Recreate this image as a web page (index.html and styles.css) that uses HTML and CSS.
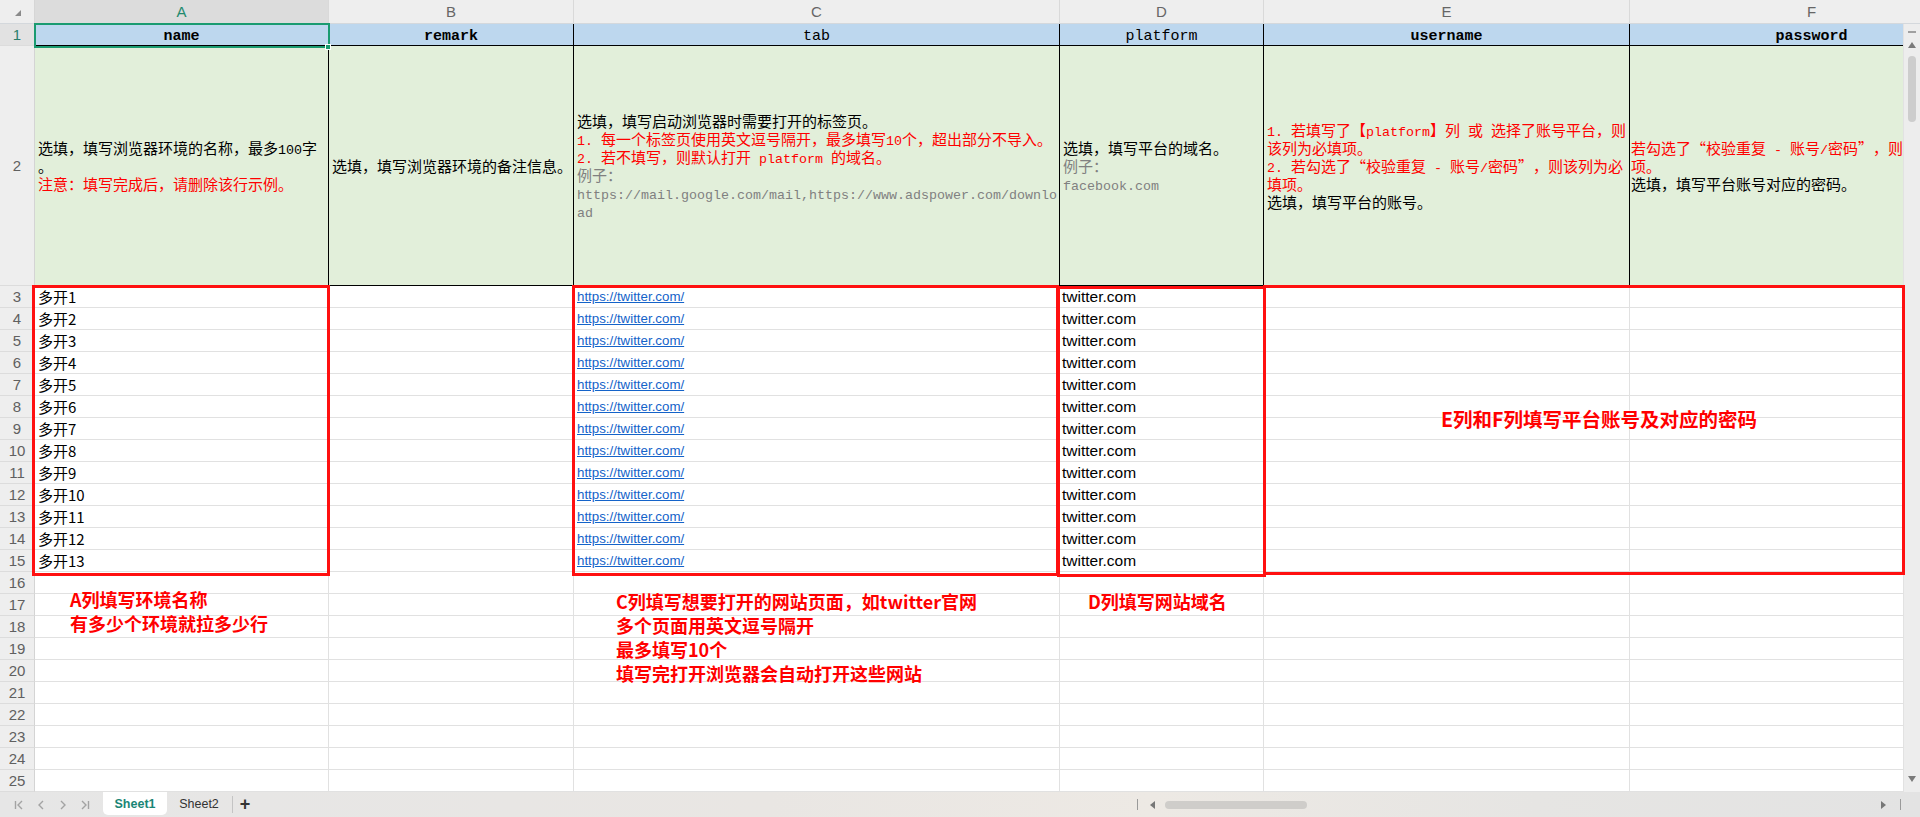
FILE: index.html
```html
<!DOCTYPE html>
<html lang="zh-CN">
<head>
<meta charset="utf-8">
<title>Sheet</title>
<link rel="stylesheet" href="styles.css">
</head>
<body>
<div class="app">
  <div class="colbar">
    <div class="corner"><span class="corner-tri"></span></div>
    <div class="ch ca on">A</div>
    <div class="ch cb">B</div>
    <div class="ch cc">C</div>
    <div class="ch cd">D</div>
    <div class="ch ce">E</div>
    <div class="ch cf">F</div>
  </div>

  <div class="body">
    <div class="grid">
      <div class="row r1">
        <div class="rh on">1</div>
        <div class="c ca"><b>name</b></div>
        <div class="c cb"><b>remark</b></div>
        <div class="c cc">tab</div>
        <div class="c cd">platform</div>
        <div class="c ce"><b>username</b></div>
        <div class="c cf"><b>password</b></div>
      </div>

      <div class="row r2">
        <div class="rh">2</div>
        <div class="c ca"><div class="txt">
          <div>选填，填写浏览器环境的名称，最多<span class="m">100</span>字</div>
          <div>。</div>
          <div class="red">注意：填写完成后，请删除该行示例。</div>
        </div></div>
        <div class="c cb"><div class="txt">
          <div>选填，填写浏览器环境的备注信息。</div>
        </div></div>
        <div class="c cc"><div class="txt">
          <div>选填，填写启动浏览器时需要打开的标签页。</div>
          <div class="red"><span class="m">1. </span>每一个标签页使用英文逗号隔开，最多填写<span class="m">10</span>个，超出部分不导入。</div>
          <div class="red"><span class="m">2. </span>若不填写，则默认打开<span class="m"> platform </span>的域名。</div>
          <div class="gray">例子：</div>
          <div class="gray"><span class="m">https://mail.google.com/mail,https://www.adspower.com/downlo</span></div>
          <div class="gray"><span class="m">ad</span></div>
        </div></div>
        <div class="c cd"><div class="txt">
          <div>选填，填写平台的域名。</div>
          <div class="gray">例子：</div>
          <div class="gray"><span class="m">facebook.com</span></div>
        </div></div>
        <div class="c ce"><div class="txt">
          <div class="red"><span class="m">1. </span>若填写了【<span class="m">platform</span>】列<span class="m"> </span>或<span class="m"> </span>选择了账号平台，则</div>
          <div class="red">该列为必填项。</div>
          <div class="red"><span class="m">2. </span>若勾选了<span class="ql">“</span>校验重复<span class="m"> - </span>账号<span class="m">/</span>密码<span class="qr">”</span>，则该列为必</div>
          <div class="red">填项。</div>
          <div>选填，填写平台的账号。</div>
        </div></div>
        <div class="c cf fcell"><div class="txt">
          <div class="red">若勾选了<span class="ql">“</span>校验重复<span class="m"> - </span>账号<span class="m">/</span>密码<span class="qr">”</span>，则</div>
          <div class="red">项。</div>
          <div>选填，填写平台账号对应的密码。</div>
        </div></div>
      </div>

      <div class="row"><div class="rh">3</div><div class="c ca">多开1</div><div class="c cb"></div><div class="c cc"><a class="lnk">https://twitter.com/</a></div><div class="c cd dom">twitter.com</div><div class="c ce"></div><div class="c cf"></div></div>
      <div class="row"><div class="rh">4</div><div class="c ca">多开2</div><div class="c cb"></div><div class="c cc"><a class="lnk">https://twitter.com/</a></div><div class="c cd dom">twitter.com</div><div class="c ce"></div><div class="c cf"></div></div>
      <div class="row"><div class="rh">5</div><div class="c ca">多开3</div><div class="c cb"></div><div class="c cc"><a class="lnk">https://twitter.com/</a></div><div class="c cd dom">twitter.com</div><div class="c ce"></div><div class="c cf"></div></div>
      <div class="row"><div class="rh">6</div><div class="c ca">多开4</div><div class="c cb"></div><div class="c cc"><a class="lnk">https://twitter.com/</a></div><div class="c cd dom">twitter.com</div><div class="c ce"></div><div class="c cf"></div></div>
      <div class="row"><div class="rh">7</div><div class="c ca">多开5</div><div class="c cb"></div><div class="c cc"><a class="lnk">https://twitter.com/</a></div><div class="c cd dom">twitter.com</div><div class="c ce"></div><div class="c cf"></div></div>
      <div class="row"><div class="rh">8</div><div class="c ca">多开6</div><div class="c cb"></div><div class="c cc"><a class="lnk">https://twitter.com/</a></div><div class="c cd dom">twitter.com</div><div class="c ce"></div><div class="c cf"></div></div>
      <div class="row"><div class="rh">9</div><div class="c ca">多开7</div><div class="c cb"></div><div class="c cc"><a class="lnk">https://twitter.com/</a></div><div class="c cd dom">twitter.com</div><div class="c ce"></div><div class="c cf"></div></div>
      <div class="row"><div class="rh">10</div><div class="c ca">多开8</div><div class="c cb"></div><div class="c cc"><a class="lnk">https://twitter.com/</a></div><div class="c cd dom">twitter.com</div><div class="c ce"></div><div class="c cf"></div></div>
      <div class="row"><div class="rh">11</div><div class="c ca">多开9</div><div class="c cb"></div><div class="c cc"><a class="lnk">https://twitter.com/</a></div><div class="c cd dom">twitter.com</div><div class="c ce"></div><div class="c cf"></div></div>
      <div class="row"><div class="rh">12</div><div class="c ca">多开10</div><div class="c cb"></div><div class="c cc"><a class="lnk">https://twitter.com/</a></div><div class="c cd dom">twitter.com</div><div class="c ce"></div><div class="c cf"></div></div>
      <div class="row"><div class="rh">13</div><div class="c ca">多开11</div><div class="c cb"></div><div class="c cc"><a class="lnk">https://twitter.com/</a></div><div class="c cd dom">twitter.com</div><div class="c ce"></div><div class="c cf"></div></div>
      <div class="row"><div class="rh">14</div><div class="c ca">多开12</div><div class="c cb"></div><div class="c cc"><a class="lnk">https://twitter.com/</a></div><div class="c cd dom">twitter.com</div><div class="c ce"></div><div class="c cf"></div></div>
      <div class="row"><div class="rh">15</div><div class="c ca">多开13</div><div class="c cb"></div><div class="c cc"><a class="lnk">https://twitter.com/</a></div><div class="c cd dom">twitter.com</div><div class="c ce"></div><div class="c cf"></div></div>
      <div class="row"><div class="rh">16</div><div class="c ca"></div><div class="c cb"></div><div class="c cc"></div><div class="c cd"></div><div class="c ce"></div><div class="c cf"></div></div>
      <div class="row"><div class="rh">17</div><div class="c ca"></div><div class="c cb"></div><div class="c cc"></div><div class="c cd"></div><div class="c ce"></div><div class="c cf"></div></div>
      <div class="row"><div class="rh">18</div><div class="c ca"></div><div class="c cb"></div><div class="c cc"></div><div class="c cd"></div><div class="c ce"></div><div class="c cf"></div></div>
      <div class="row"><div class="rh">19</div><div class="c ca"></div><div class="c cb"></div><div class="c cc"></div><div class="c cd"></div><div class="c ce"></div><div class="c cf"></div></div>
      <div class="row"><div class="rh">20</div><div class="c ca"></div><div class="c cb"></div><div class="c cc"></div><div class="c cd"></div><div class="c ce"></div><div class="c cf"></div></div>
      <div class="row"><div class="rh">21</div><div class="c ca"></div><div class="c cb"></div><div class="c cc"></div><div class="c cd"></div><div class="c ce"></div><div class="c cf"></div></div>
      <div class="row"><div class="rh">22</div><div class="c ca"></div><div class="c cb"></div><div class="c cc"></div><div class="c cd"></div><div class="c ce"></div><div class="c cf"></div></div>
      <div class="row"><div class="rh">23</div><div class="c ca"></div><div class="c cb"></div><div class="c cc"></div><div class="c cd"></div><div class="c ce"></div><div class="c cf"></div></div>
      <div class="row"><div class="rh">24</div><div class="c ca"></div><div class="c cb"></div><div class="c cc"></div><div class="c cd"></div><div class="c ce"></div><div class="c cf"></div></div>
      <div class="row"><div class="rh">25</div><div class="c ca"></div><div class="c cb"></div><div class="c cc"></div><div class="c cd"></div><div class="c ce"></div><div class="c cf"></div></div>
    </div>

    <div class="vscroll">
      <span class="vdash"></span>
      <span class="tri-up"></span>
      <span class="vthumb"></span>
      <span class="vspace"></span>
      <span class="tri-down"></span>
    </div>

    <!-- overlays -->
    <div class="sel"></div>
    <div class="handle"></div>
    <div class="box box-a"></div>
    <div class="box box-c"></div>
    <div class="box box-d"></div>
    <div class="box box-ef"></div>
    <div class="note note-a">A列填写环境名称<br>有多少个环境就拉多少行</div>
    <div class="note note-c">C列填写想要打开的网站页面，如twitter官网<br>多个页面用英文逗号隔开<br>最多填写10个<br>填写完打开浏览器会自动打开这些网站</div>
    <div class="note note-d">D列填写网站域名</div>
    <div class="note note-ef">E列和F列填写平台账号及对应的密码</div>
  </div>

  <div class="tabbar">
    <div class="sheetnav">
      <div class="navs">
        <svg class="nav" viewBox="0 0 12 12"><path d="M2.5 2v8M9 2L5 6l4 4"/></svg>
        <svg class="nav" viewBox="0 0 12 12"><path d="M8 2L4 6l4 4"/></svg>
        <svg class="nav" viewBox="0 0 12 12"><path d="M4 2l4 4-4 4"/></svg>
        <svg class="nav" viewBox="0 0 12 12"><path d="M3 2l4 4-4 4M9.5 2v8"/></svg>
      </div>
      <div class="tab active">Sheet1</div>
      <div class="tab">Sheet2</div>
      <span class="tabsep"></span>
      <div class="addtab">+</div>
    </div>
    <div class="hscroll">
      <span class="hbar"></span>
      <span class="tri-left"></span>
      <span class="hthumb"></span>
      <span class="hspace"></span>
      <span class="tri-right"></span>
      <span class="hbar hbar-r"></span>
    </div>
  </div>
</div>
</body>
</html>
```

FILE: styles.css
```css
html, body {
  margin: 0;
  padding: 0;
  background: #ffffff;
}

body {
  font-family: "Noto Sans CJK SC", "Liberation Sans", sans-serif;
  font-size: 15px;
  color: #000;
}

.app {
  width: 1920px;
  height: 817px;
  display: flex;
  flex-direction: column;
  overflow: hidden;
}

/* column letter bar */
.colbar {
  height: 24px;
  display: flex;
  background: #eeeeee;
  border-bottom: 1px solid #d4d8dc;
  box-sizing: border-box;
  overflow: hidden;
  flex: none;
}

.corner {
  width: 35px;
  flex: none;
  box-sizing: border-box;
  border-right: 1px solid #d6d6d6;
  display: flex;
  justify-content: flex-end;
  align-items: flex-end;
  padding: 0 13px 7px 0;
}

.corner-tri {
  width: 0;
  height: 0;
  border-left: 6px solid transparent;
  border-bottom: 6px solid #8a8a8a;
}

.ch {
  flex: none;
  box-sizing: border-box;
  border-right: 1px solid #d9d9d9;
  text-align: center;
  font-family: "Liberation Sans", sans-serif;
  font-size: 15px;
  line-height: 23px;
  color: #666;
}

.ch.on {
  background: #dcdcdc;
  color: #1f8a6e;
}

/* column widths */
.ca { width: 294px; }
.cb { width: 245px; }
.cc { width: 486px; }
.cd { width: 204px; }
.ce { width: 366px; }
.cf { width: 364px; }

/* body */
.body {
  position: relative;
  height: 768px;
  display: flex;
  flex: none;
}

.grid {
  width: 1903px;
  height: 768px;
  overflow: hidden;
  flex: none;
}

.row {
  display: flex;
  height: 22px;
}

.rh {
  width: 35px;
  flex: none;
  box-sizing: border-box;
  background: #eeeeee;
  border-right: 1px solid #d4d4d4;
  border-bottom: 1px solid #dcdcdc;
  text-align: center;
  font-family: "Liberation Sans", sans-serif;
  font-size: 15px;
  line-height: 21px;
  color: #606060;
}

.rh.on {
  background: #e2e2e2;
  color: #2b7f6c;
}

.c {
  flex: none;
  box-sizing: border-box;
  border-right: 1px solid #e1e1e1;
  border-bottom: 1px solid #e1e1e1;
  padding-left: 3px;
  white-space: nowrap;
  overflow: hidden;
  display: flex;
  align-items: center;
  font-size: 15px;
  line-height: 21px;
}

/* row 1 header */
.r1 .c {
  background: #bdd7ee;
  border-color: #000;
  justify-content: center;
  padding-left: 0;
  padding-top: 4px;
  font-family: "Liberation Mono", monospace;
  font-size: 15px;
  line-height: 16px;
}

.r1 .c b {
  font-weight: bold;
}

/* row 2 description */
.r2 {
  height: 240px;
}

.r2 .rh {
  line-height: 240px;
}

.r2 .c {
  background: #e2efda;
  border-color: #000;
  padding-top: 0;
  align-items: center;
}

.r2 .fcell {
  padding-left: 1px;
}

.txt {
  font-size: 15px;
  line-height: 18px;
}

.txt > div {
  height: 18px;
}

.m {
  font-family: "Liberation Mono", monospace;
  font-size: 13.33px;
  line-height: 18px;
}

.ql, .qr {
  display: inline-block;
  width: 15px;
}

.ql { text-align: right; }
.qr { text-align: left; }

.red { color: #ff0000; }
.gray { color: #808080; }

.lnk {
  font-family: "Liberation Sans", sans-serif;
  font-size: 13.3px;
  color: #1463c9;
  text-decoration: underline;
}

.dom {
  font-family: "Liberation Sans", sans-serif;
  font-size: 15.5px;
  padding-left: 2px;
}

/* vertical scrollbar */
.vscroll {
  width: 17px;
  flex: none;
  box-sizing: border-box;
  background: #ededed;
  border-left: 1px solid #e2e2e2;
  display: flex;
  flex-direction: column;
  align-items: center;
}

.vdash {
  width: 8px;
  height: 2px;
  background: #a0a0a0;
  margin-top: 7px;
}

.tri-up {
  width: 0;
  height: 0;
  border-left: 4px solid transparent;
  border-right: 4px solid transparent;
  border-bottom: 6px solid #7a7a7a;
  margin-top: 9px;
}

.vthumb {
  width: 8px;
  height: 66px;
  border-radius: 4px;
  background: #cdcdcd;
  margin-top: 8px;
}

.vspace { flex: 1; }

.tri-down {
  width: 0;
  height: 0;
  border-left: 4px solid transparent;
  border-right: 4px solid transparent;
  border-top: 6px solid #7a7a7a;
  margin-bottom: 10px;
}

/* overlays */
.sel {
  position: absolute;
  left: 34px;
  top: -1px;
  width: 296px;
  height: 25px;
  box-sizing: border-box;
  border: 2px solid #1a9b70;
}

.handle {
  position: absolute;
  left: 325px;
  top: 20px;
  width: 6px;
  height: 6px;
  box-sizing: border-box;
  background: #1a9b70;
  border: 1px solid #ffffff;
}

.box {
  position: absolute;
  box-sizing: border-box;
  border: 3px solid #ff1010;
}

.box-a { left: 32px; top: 261px; width: 298px; height: 291px; }
.box-c { left: 572px; top: 261px; width: 487px; height: 291px; }
.box-d { left: 1057px; top: 262px; width: 209px; height: 291px; }
.box-ef { left: 1263px; top: 261px; width: 642px; height: 290px; }

.note {
  position: absolute;
  color: #ff0000;
  font-family: "Noto Sans CJK SC", sans-serif;
  font-weight: bold;
  font-size: 18px;
  line-height: 24px;
  white-space: nowrap;
  text-shadow: 0 0 1px #fff, 0 0 2px #fff;
}

.note-a { left: 70px; top: 563px; }
.note-c { left: 616px; top: 565px; }
.note-d { left: 1088px; top: 565px; }
.note-ef { left: 1441px; top: 383px; font-size: 19.5px; }

/* tab bar */
.tabbar {
  height: 25px;
  flex: none;
  display: flex;
  background: linear-gradient(90deg, #e6e6e6 0%, #e9e6e3 40%, #ede9e4 60%, #e6e5e3 80%, #e3e3e3 100%);
}

.sheetnav {
  width: 1132px;
  flex: none;
  display: flex;
  align-items: stretch;
}

.navs {
  display: flex;
  align-items: center;
  gap: 10px;
  padding-left: 13px;
}

.nav {
  width: 12px;
  height: 12px;
  fill: none;
  stroke: #a3a3a3;
  stroke-width: 1.4;
}

.tab {
  width: 64px;
  height: 23px;
  display: flex;
  align-items: center;
  justify-content: center;
  font-family: "Liberation Sans", sans-serif;
  font-size: 12.5px;
  color: #333;
}

.tab.active {
  margin-left: 12px;
  background: #ffffff;
  border-radius: 0 0 5px 5px;
  color: #1a8575;
  font-weight: bold;
}

.tabsep {
  width: 1px;
  height: 17px;
  background: #c4c4c4;
  align-self: center;
  margin-left: 1px;
}

.addtab {
  width: 16px;
  margin-left: 4px;
  display: flex;
  align-items: center;
  justify-content: center;
  font-family: "Liberation Sans", sans-serif;
  font-size: 18px;
  font-weight: bold;
  color: #333;
}

.hscroll {
  flex: 1;
  display: flex;
  align-items: center;
  padding-right: 19px;
}

.hbar {
  width: 1px;
  height: 11px;
  background: #9a9a9a;
  margin-left: 5px;
}

.tri-left {
  width: 0;
  height: 0;
  border-top: 4px solid transparent;
  border-bottom: 4px solid transparent;
  border-right: 5px solid #777;
  margin-left: 12px;
}

.hthumb {
  width: 142px;
  height: 8px;
  border-radius: 4px;
  background: #cfcdca;
  margin-left: 10px;
}

.hspace { flex: 1; }

.tri-right {
  width: 0;
  height: 0;
  border-top: 4px solid transparent;
  border-bottom: 4px solid transparent;
  border-left: 5px solid #777;
}

.hbar-r {
  margin-left: 14px;
}
```
